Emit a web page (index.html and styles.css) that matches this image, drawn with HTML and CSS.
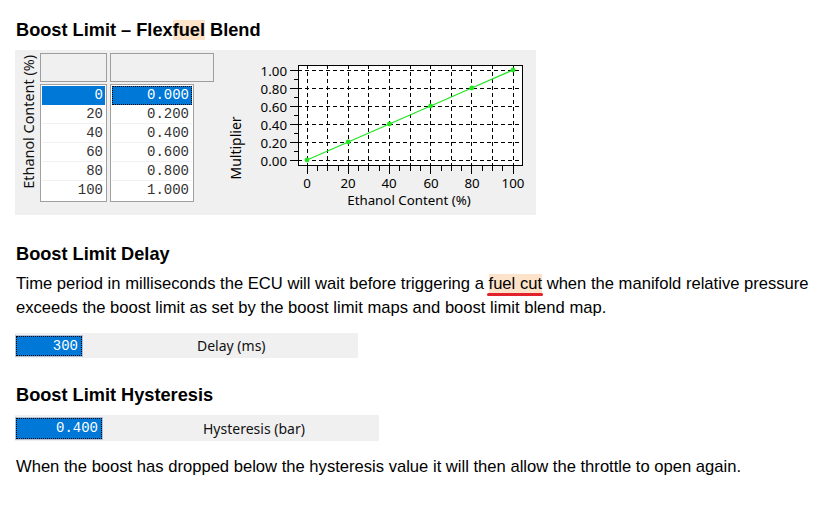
FILE: index.html
```html
<!DOCTYPE html>
<html>
<head>
<meta charset="utf-8">
<link rel="stylesheet" href="styles.css">
</head>
<body>
<h2 class="h">Boost Limit – Flex<span class="hl">fuel</span> Blend</h2>
<div class="panel">
  <div class="vlabel">Ethanol Content (%)</div>
  <div class="tbl">
    <div class="col c1">
      <div class="hdr"></div>
      <div class="tbody">
        <div class="cell sel">0</div>
        <div class="cell">20</div>
        <div class="cell">40</div>
        <div class="cell">60</div>
        <div class="cell">80</div>
        <div class="cell">100</div>
      </div>
    </div>
    <div class="col c2">
      <div class="hdr"></div>
      <div class="tbody">
        <div class="cell sel focus">0.000</div>
        <div class="cell">0.200</div>
        <div class="cell">0.400</div>
        <div class="cell">0.600</div>
        <div class="cell">0.800</div>
        <div class="cell">1.000</div>
      </div>
    </div>
  </div>
  <svg class="chart" width="310" height="165" viewBox="0 0 310 165">
    <rect x="72" y="15" width="225" height="101" fill="#fff"/>
    <g stroke="#000" stroke-width="1" stroke-dasharray="4 3" fill="none">
      <line x1="72" y1="20.5" x2="297" y2="20.5"/>
      <line x1="72" y1="38.5" x2="297" y2="38.5"/>
      <line x1="72" y1="56.5" x2="297" y2="56.5"/>
      <line x1="72" y1="74.5" x2="297" y2="74.5"/>
      <line x1="72" y1="92.5" x2="297" y2="92.5"/>
      <line x1="72" y1="110.5" x2="297" y2="110.5"/>
      <line x1="81.5" y1="15" x2="81.5" y2="116"/>
      <line x1="101.5" y1="15" x2="101.5" y2="116"/>
      <line x1="122.5" y1="15" x2="122.5" y2="116"/>
      <line x1="142.5" y1="15" x2="142.5" y2="116"/>
      <line x1="163.5" y1="15" x2="163.5" y2="116"/>
      <line x1="184.5" y1="15" x2="184.5" y2="116"/>
      <line x1="204.5" y1="15" x2="204.5" y2="116"/>
      <line x1="225.5" y1="15" x2="225.5" y2="116"/>
      <line x1="245.5" y1="15" x2="245.5" y2="116"/>
      <line x1="266.5" y1="15" x2="266.5" y2="116"/>
      <line x1="287.5" y1="15" x2="287.5" y2="116"/>
    </g>
    <rect x="72.5" y="15.5" width="224" height="100" fill="none" stroke="#000" stroke-width="1"/>
    <g stroke="#000" stroke-width="1">
      <line x1="64" y1="20.5" x2="72" y2="20.5"/>
      <line x1="64" y1="38.5" x2="72" y2="38.5"/>
      <line x1="64" y1="56.5" x2="72" y2="56.5"/>
      <line x1="64" y1="74.5" x2="72" y2="74.5"/>
      <line x1="64" y1="92.5" x2="72" y2="92.5"/>
      <line x1="64" y1="110.5" x2="72" y2="110.5"/>
      <line x1="68" y1="29.5" x2="72" y2="29.5"/>
      <line x1="68" y1="47.5" x2="72" y2="47.5"/>
      <line x1="68" y1="65.5" x2="72" y2="65.5"/>
      <line x1="68" y1="83.5" x2="72" y2="83.5"/>
      <line x1="68" y1="101.5" x2="72" y2="101.5"/>
      <line x1="81.5" y1="116" x2="81.5" y2="124"/>
      <line x1="91.5" y1="116" x2="91.5" y2="121"/>
      <line x1="101.5" y1="116" x2="101.5" y2="121"/>
      <line x1="112.5" y1="116" x2="112.5" y2="121"/>
      <line x1="122.5" y1="116" x2="122.5" y2="124"/>
      <line x1="132.5" y1="116" x2="132.5" y2="121"/>
      <line x1="142.5" y1="116" x2="142.5" y2="121"/>
      <line x1="153.5" y1="116" x2="153.5" y2="121"/>
      <line x1="163.5" y1="116" x2="163.5" y2="124"/>
      <line x1="173.5" y1="116" x2="173.5" y2="121"/>
      <line x1="184.5" y1="116" x2="184.5" y2="121"/>
      <line x1="194.5" y1="116" x2="194.5" y2="121"/>
      <line x1="204.5" y1="116" x2="204.5" y2="124"/>
      <line x1="215.5" y1="116" x2="215.5" y2="121"/>
      <line x1="225.5" y1="116" x2="225.5" y2="121"/>
      <line x1="235.5" y1="116" x2="235.5" y2="121"/>
      <line x1="245.5" y1="116" x2="245.5" y2="124"/>
      <line x1="256.5" y1="116" x2="256.5" y2="121"/>
      <line x1="266.5" y1="116" x2="266.5" y2="121"/>
      <line x1="276.5" y1="116" x2="276.5" y2="121"/>
      <line x1="287.5" y1="116" x2="287.5" y2="124"/>
    </g>
    <polyline points="81,110 122.2,92 163.4,74 204.6,56 245.8,38 287,20" fill="none" stroke="#22e622" stroke-width="1.3"/>
    <g fill="#22e622">
      <circle cx="81" cy="110" r="2.4"/>
      <circle cx="122.2" cy="92" r="2.4"/>
      <circle cx="163.4" cy="74" r="2.4"/>
      <circle cx="204.6" cy="56" r="2.4"/>
      <circle cx="245.8" cy="38" r="2.4"/>
      <circle cx="287" cy="20" r="2.4"/>
    </g>
    <g class="ax" text-anchor="end">
      <text x="61" y="25.5">1.00</text>
      <text x="61" y="43.5">0.80</text>
      <text x="61" y="61.5">0.60</text>
      <text x="61" y="79.5">0.40</text>
      <text x="61" y="97.5">0.20</text>
      <text x="61" y="115.5">0.00</text>
    </g>
    <g class="ax" text-anchor="middle">
      <text x="81" y="138">0</text>
      <text x="122" y="138">20</text>
      <text x="163" y="138">40</text>
      <text x="205" y="138">60</text>
      <text x="246" y="138">80</text>
      <text x="287" y="138">100</text>
      <text x="183" y="155">Ethanol Content (%)</text>
      <text class="axl" x="0" y="0" transform="translate(15 98) rotate(-90)">Multiplier</text>
    </g>
  </svg>
</div>

<h2 class="h h2">Boost Limit Delay</h2>
<p class="p">Time period in milliseconds the ECU will wait before triggering a <span class="hl err">fuel cut</span> when the manifold relative pressure exceeds the boost limit as set by the boost limit maps and boost limit blend map.</p>
<div class="ctl ctl-delay">
  <div class="inp inp-delay">300</div>
  <div class="lbl lbl-delay">Delay (ms)</div>
</div>

<h2 class="h h3">Boost Limit Hysteresis</h2>
<div class="ctl ctl-hyst">
  <div class="inp inp-hyst">0.400</div>
  <div class="lbl lbl-hyst">Hysteresis (bar)</div>
</div>
<p class="p p2">When the boost has dropped below the hysteresis value it will then allow the throttle to open again.</p>
</body>
</html>
```

FILE: styles.css
```css
html, body {
  margin: 0;
  padding: 0;
  background: #fff;
}
body {
  padding: 20px 0 0 15px;
  font-family: "Liberation Sans", Arial, sans-serif;
  color: #000;
}
.h {
  margin: 0;
  padding-left: 1px;
  font-size: 18.2px;
  line-height: 20px;
  font-weight: bold;
}
.hl {
  background: #fde3c9;
}
.panel {
  display: flex;
  align-items: flex-start;
  width: 521px;
  height: 165px;
  margin-top: 10px;
  background: #f0f0f0;
}
.vlabel {
  writing-mode: vertical-rl;
  transform: rotate(180deg);
  font-family: "Noto Sans", sans-serif;
  font-size: 14.4px;
  line-height: 16px;
  margin: 5px 0 0 6px;
  color: #111;
  white-space: nowrap;
}
.tbl {
  display: flex;
  gap: 3px;
  margin: 3px 0 0 3px;
}
.col {
  display: flex;
  flex-direction: column;
  gap: 2px;
}
.hdr {
  height: 29px;
  box-sizing: border-box;
  border: 1px solid #9d9d9d;
  background: #f0f0f0;
}
.c1 .hdr, .c1 .tbody { width: 67px; }
.c2 .hdr { width: 104px; }
.c2 .tbody { width: 84px; }
.tbody {
  box-sizing: border-box;
  border: 1px solid #a0a0a0;
  background: #fff;
  padding: 1px;
}
.cell {
  height: 19px;
  box-sizing: border-box;
  line-height: 19px;
  border-bottom: 1px solid #f0f0f0;
  text-align: right;
  padding-right: 2px;
  font-family: "Liberation Mono", "Courier New", monospace;
  font-size: 14px;
  color: #333;
}
.cell:last-child { border-bottom: 0; }
.c2 .cell { padding-right: 3px; }
.sel {
  background: #0078d7;
  color: #fff;
  border-bottom-color: #0078d7;
}
.focus {
  outline: 1px dotted #000;
  outline-offset: -1px;
}
.chart {
  display: block;
  margin-left: auto;
}
.ax {
  font-family: "Noto Sans", sans-serif;
  font-size: 13.3px;
  fill: #000;
}
.axl {
  font-size: 14px;
}
.h2 { margin-top: 29px; }
.p {
  margin: 8px 0 0 1px;
  font-size: 16.6px;
  line-height: 24px;
  width: 805px;
}
.err {
  position: relative;
}
.err::after {
  content: "";
  position: absolute;
  left: -2px;
  right: -1px;
  bottom: -3px;
  height: 3px;
  border-radius: 2px;
  background: #e1222a;
}
.ctl {
  display: flex;
  align-items: center;
  background: #f0f0f0;
  margin-top: 13px;
}
.ctl-delay { width: 343px; height: 25px; }
.ctl-hyst { width: 364px; height: 26px; margin-top: 10px; }
.inp {
  box-sizing: border-box;
  border: 1px dotted #000;
  box-shadow: 0 0 0 1px #b4c2d6;
  background: #0078d7;
  color: #fff;
  text-align: right;
  font-family: "Liberation Mono", "Courier New", monospace;
  font-size: 14px;
  padding-right: 3px;
  margin-left: 1px;
}
.inp-delay { width: 66px; height: 20px; line-height: 18px; }
.inp-hyst { width: 86px; height: 21px; line-height: 19px; }
.lbl {
  font-family: "Noto Sans", sans-serif;
  font-size: 14px;
  color: #111;
}
.lbl-delay { margin-left: 115px; }
.lbl-hyst { margin-left: 101px; }
.h3 { margin-top: 27px; }
.p2 { margin-top: 14px; }
```
